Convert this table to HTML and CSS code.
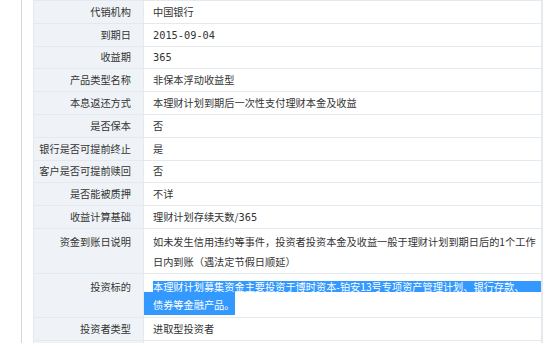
FILE: index.html
```html
<!DOCTYPE html>
<html lang="zh-CN">
  <head>
    <meta charset="UTF-8" />
    <meta name="viewport" content="width=device-width, initial-scale=1.0" />
    <link rel="stylesheet" href="styles.css">
    <title>产品详情</title>
  </head>
  <body>
    <div class="page">
      <table class="detail">
        <tr><td class="label">代销机构</td><td class="value">中国银行</td></tr>
        <tr><td class="label">到期日</td><td class="value num">2015-09-04</td></tr>
        <tr><td class="label">收益期</td><td class="value num">365</td></tr>
        <tr><td class="label">产品类型名称</td><td class="value">非保本浮动收益型</td></tr>
        <tr><td class="label">本息返还方式</td><td class="value">本理财计划到期后一次性支付理财本金及收益</td></tr>
        <tr><td class="label">是否保本</td><td class="value">否</td></tr>
        <tr><td class="label">银行是否可提前终止</td><td class="value">是</td></tr>
        <tr><td class="label">客户是否可提前赎回</td><td class="value">否</td></tr>
        <tr><td class="label">是否能被质押</td><td class="value">不详</td></tr>
        <tr><td class="label">收益计算基础</td><td class="value">理财计划存续天数/<span class="num">365</span></td></tr>
        <tr class="tall">
          <td class="label">资金到账日说明</td>
          <td class="value">如未发生信用违约等事件，投资者投资本金及收益一般于理财计划到期日后的1个工作日内到账（遇法定节假日顺延）</td>
        </tr>
        <tr class="tall">
          <td class="label">投资标的</td>
          <td class="value">
            <span class="picked first">本理财计划募集资金主要投资于博时资本-铂安13号专项资产管理计划、银行存款、</span>
            <span class="picked second">债券等金融产品。</span>
          </td>
        </tr>
        <tr><td class="label">投资者类型</td><td class="value">进取型投资者</td></tr>
        <tr><td class="label"></td><td class="value"></td></tr>
      </table>
    </div>
  </body>
</html>
```

FILE: styles.css
```css
body {
  margin: 0;
  background-color: #fff;
  font-family: "Noto Sans CJK SC", "Microsoft YaHei", sans-serif;
  font-size: 10.2px;
  color: #333;
}

.page {
  margin-left: 21px;
  padding-left: 11px;
  border-left: 1px solid #d6d6d6;
  height: 343px;
  overflow: hidden;
}

.detail {
  width: 510px;
  table-layout: fixed;
  border-collapse: collapse;
  border-top: 1px solid #e4e9ee;
  border-left: 1px solid #e4e9ee;
  border-right: 2px solid #e4e9ee;
}

.detail td {
  height: 21.8px;
  padding: 0;
  border-bottom: 1px solid #e4e9ee;
  line-height: 20px;
  vertical-align: middle;
  white-space: nowrap;
  overflow: hidden;
}

.detail .label {
  box-sizing: border-box;
  width: 110px;
  padding-right: 12px;
  text-align: right;
  background-color: #eff3f7;
  border-right: 1px solid #e4e9ee;
}

.detail .value {
  padding-left: 9px;
  background-color: #fff;
}

.num {
  font-family: "DejaVu Sans Mono", "Liberation Mono", monospace;
  font-size: 10.3px;
}

.detail .tall td {
  height: 44px;
  vertical-align: top;
  white-space: normal;
  line-height: 20.5px;
  padding-top: 3px;
  box-sizing: border-box;
}

/* selected text in the investment row */
.picked {
  display: block;
  background-color: #3399ff;
  color: #fff;
}

.picked.first {
  height: 11px;
  line-height: 11px;
  margin-top: 4px;
  white-space: nowrap;
}

.picked.second {
  display: inline-block;
  margin-left: -9px;
  padding-left: 9px;
  height: 23px;
  line-height: 25px;
}
```
